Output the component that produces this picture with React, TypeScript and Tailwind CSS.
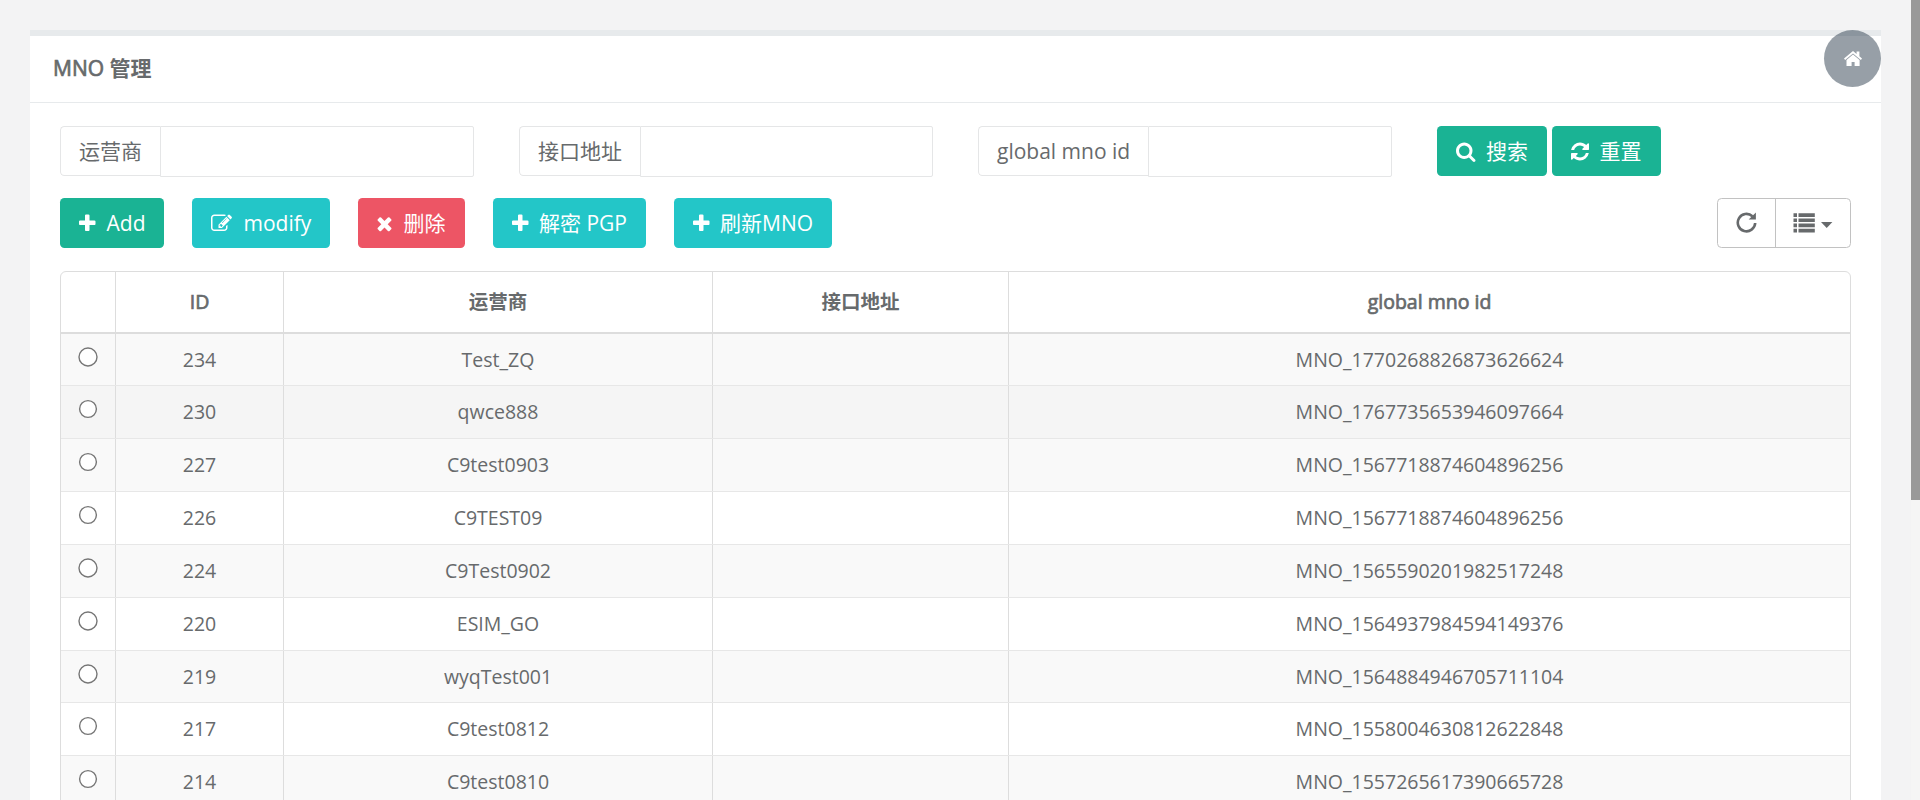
import React from "react";

type IconProps = { d: string; x?: number; w: number; className: string };

const Glyph = ({ d, x = 0, w, className }: IconProps) => (
  <svg viewBox={`${x} 0 ${w} 1792`} className={`shrink-0 ${className}`} fill="currentColor" aria-hidden="true">
    <path d={d} />
  </svg>
);

const PLUS =
  "M1600 736v192q0 40-28 68t-68 28h-416v416q0 40-28 68t-68 28h-192q-40 0-68-28t-28-68v-416h-416q-40 0-68-28t-28-68v-192q0-40 28-68t68-28h416v-416q0-40 28-68t68-28h192q40 0 68 28t28 68v416h416q40 0 68 28t28 68z";
const TIMES =
  "M1490 1322q0 40-28 68l-136 136q-28 28-68 28t-68-28l-294-294-294 294q-28 28-68 28t-68-28l-136-136q-28-28-28-68t28-68l294-294-294-294q-28-28-28-68t28-68l136-136q28-28 68-28t68 28l294 294 294-294q28-28 68-28t68 28l136 136q28 28 28 68t-28 68l-294 294 294 294q28 28 28 68z";
const SEARCH =
  "M1216 832q0-185-131.5-316.5t-316.5-131.5-316.5 131.5-131.5 316.5 131.5 316.5 316.5 131.5 316.5-131.5 131.5-316.5zm512 832q0 52-38 90t-90 38q-54 0-90-38l-343-342q-179 124-399 124-143 0-273.5-55.5t-225-150-150-225-55.5-273.5 55.5-273.5 150-225 225-150 273.5-55.5 273.5 55.5 225 150 150 225 55.5 273.5q0 220-124 399l343 343q37 37 37 90z";
const REFRESH =
  "M1639 1056q0 5-1 7-64 268-268 434.5t-478 166.5q-146 0-282.5-55t-243.5-157l-129 129q-19 19-45 19t-45-19-19-45v-448q0-26 19-45t45-19h448q26 0 45 19t19 45-19 45l-137 137q71 66 161 102t187 36q134 0 250-65t186-179q11-17 53-117 8-23 30-23h192q13 0 22.5 9.5t9.5 22.5zm25-800v448q0 26-19 45t-45 19h-448q-26 0-45-19t-19-45 19-45l138-138q-148-137-349-137-134 0-250 65t-186 179q-11 17-53 117-8 23-30 23h-199q-13 0-22.5-9.5t-9.5-22.5v-7q65-268 270-434.5t480-166.5q146 0 284 55.5t245 156.5l130-129q19-19 45-19t45 19 19 45z";
const EDIT =
  "M888 1184l116-116-152-152-116 116v56h96v96h56zm440-720q-16-16-33 1l-350 350q-17 17-1 33t33-1l350-350q17-17 1-33zm80 594v190q0 119-84.5 203.5t-203.5 84.5h-832q-119 0-203.5-84.5t-84.5-203.5v-832q0-119 84.5-203.5t203.5-84.5h832q63 0 117 25 15 7 18 23 3 17-9 29l-49 49q-14 14-32 8-23-6-45-6h-832q-66 0-113 47t-47 113v832q0 66 47 113t113 47h832q66 0 113-47t47-113v-126q0-13 9-22l64-64q15-15 35-7t20 29zm-96-738l288 288-672 672h-288v-288zm444 132l-92 92-288-288 92-92q28-28 68-28t68 28l152 152q28 28 28 68t-28 68z";

const Plus = () => <Glyph d={PLUS} x={192} w={1408} className="w-[16.5px] h-[21px]" />;

const Button = ({ icon, label, className }: { icon: React.ReactNode; label: string; className: string }) => (
  <button className={`flex h-[50px] shrink-0 items-center rounded-[4.5px] pl-[19px] text-[21px] leading-[30px] text-white whitespace-nowrap ${className}`}>
    {icon}
    <span>{label}</span>
  </button>
);

const Field = ({ label, labelClass }: { label: string; labelClass: string }) => (
  <div className="flex w-[414px] items-start text-[21px]">
    <span className={`flex h-[50px] shrink-0 items-center rounded-l-[4.5px] border border-r-0 border-[#e5e6e7] pl-[18px] pt-[2px] whitespace-nowrap ${labelClass}`}>
      {label}
    </span>
    <input className="h-[51px] min-w-0 flex-1 rounded-r-[2px] border border-[#e5e6e7] bg-white px-[18px] outline-none" />
  </div>
);

const Radio = ({ r }: { r: number }) => (
  <svg viewBox="0 0 20 20" className="size-[20px]" aria-hidden="true">
    <circle cx="10" cy="10" r={r} fill="#ffffff" stroke="#767676" strokeWidth="1.4" />
  </svg>
);

const rows = [
  { id: "234", name: "Test_ZQ", gid: "MNO_1770268826873626624", cls: "h-[52px] bg-[#f9f9f9]", r: 9 },
  { id: "230", name: "qwce888", gid: "MNO_1767735653946097664", cls: "h-[53px] bg-[#f5f5f5]", r: 8.4 },
  { id: "227", name: "C9test0903", gid: "MNO_1567718874604896256", cls: "h-[53px] bg-[#f9f9f9]", r: 8.4 },
  { id: "226", name: "C9TEST09", gid: "MNO_1567718874604896256", cls: "h-[53px]", r: 8.4 },
  { id: "224", name: "C9Test0902", gid: "MNO_1565590201982517248", cls: "h-[53px] bg-[#f9f9f9]", r: 9 },
  { id: "220", name: "ESIM_GO", gid: "MNO_1564937984594149376", cls: "h-[53px]", r: 9 },
  { id: "219", name: "wyqTest001", gid: "MNO_1564884946705711104", cls: "h-[52px] bg-[#f9f9f9]", r: 9 },
  { id: "217", name: "C9test0812", gid: "MNO_1558004630812622848", cls: "h-[53px]", r: 8.4 },
  { id: "214", name: "C9test0810", gid: "MNO_1557265617390665728", cls: "h-[53px] bg-[#f9f9f9]", r: 8.4 },
];

const COLS = "grid grid-cols-[54px_168px_429px_296px_1fr]";
const CELL = "flex items-center justify-center border-l border-[#dddddd]";
const THICK = "[-webkit-text-stroke:0.7px_#676a6c]";

export default function App() {
  return (
    <div className="relative flex h-[800px] w-[1920px] overflow-hidden bg-[#f3f3f4] font-['Open_Sans','Noto_Sans_CJK_SC',sans-serif] text-[19.5px] text-[#676a6c]">
      <main className="ml-[30px] mt-[30px] flex w-[1851px] flex-col border-t-[6px] border-[#e7eaec] bg-white">
        <header className="flex h-[67px] shrink-0 items-center border-b border-[#e7eaec] pl-[23px] text-[21px]">
          <h5>
            <span className={THICK}>MNO</span> <span className="font-bold">管理</span>
          </h5>
        </header>

        <section className="flex flex-col px-[30px] pt-[23px]">
          <div className="flex h-[51px] items-start gap-[45px]">
            <Field label="运营商" labelClass="w-[100px]" />
            <Field label="接口地址" labelClass="w-[121px]" />
            <Field label="global mno id" labelClass="w-[170px]" />
            <div className="flex gap-[5px]">
              <Button icon={<Glyph d={SEARCH} x={64} w={1664} className="h-[21px] w-[19.5px]" />} label="搜索" className="w-[110px] gap-[10.5px] bg-[#1ab394]" />
              <Button icon={<Glyph d={REFRESH} x={128} w={1536} className="h-[21px] w-[18px]" />} label="重置" className="w-[109px] gap-[10.5px] bg-[#1ab394]" />
            </div>
          </div>

          <div className="mt-[21px] flex h-[50px] justify-between">
            <div className="flex gap-[28px]">
              <Button icon={<Plus />} label="Add" className="w-[104px] gap-[11px] bg-[#1ab394]" />
              <Button icon={<Glyph d={EDIT} w={1792} className="size-[21px]" />} label="modify" className="w-[138px] gap-[11.5px] bg-[#23c6c8]" />
              <Button icon={<Glyph d={TIMES} x={302} w={1188} className="h-[21px] w-[15px]" />} label="删除" className="w-[107px] gap-[11.5px] bg-[#ed5565]" />
              <Button icon={<Plus />} label="解密 PGP" className="w-[153px] gap-[10.5px] bg-[#23c6c8]" />
              <Button icon={<Plus />} label="刷新MNO" className="w-[158px] gap-[10.5px] bg-[#23c6c8]" />
            </div>
            <div className="flex w-[134px] rounded-[4.5px] border border-[#c2c2c2]">
              <button className="flex w-[57px] items-center justify-center pb-px">
                <svg viewBox="0 0 21 21" className="size-[21px]" fill="none" aria-hidden="true">
                  <path d="M16.4 4.2A8.7 8.7 0 1 0 19.2 11" stroke="#676a6c" strokeWidth="2.6" />
                  <path d="M19.9 .4v7h-7.2z" fill="#676a6c" />
                </svg>
              </button>
              <button className="flex flex-1 items-center gap-[6px] border-l border-[#c2c2c2] pl-[17px]">
                <svg viewBox="0 0 22 20" className="h-[20px] w-[22px]" fill="#676a6c" aria-hidden="true">
                  <path d="M.5 .3h3.5v3.7H.5zM5.5 .3H21.8v3.7H5.5zM.5 5.4h3.5v3.7H.5zM5.5 5.4H21.8v3.7H5.5zM.5 10.6h3.5v3.7H.5zM5.5 10.6H21.8v3.7H5.5zM.5 15.8h3.5v3.7H.5zM5.5 15.8H21.8v3.7H5.5z" />
                </svg>
                <svg viewBox="0 0 12 6" className="mt-[3px] h-[6px] w-[12px]" fill="#676a6c" aria-hidden="true">
                  <path d="M0 0h11.4L5.7 6z" />
                </svg>
              </button>
            </div>
          </div>

          <div className="mt-[23px] rounded-t-[6px] border border-[#dddddd] bg-white">
            <div className={`${COLS} h-[62px] border-b-2 border-[#dddddd]`}>
              <div />
              <div className={`${CELL} ${THICK}`}>ID</div>
              <div className={`${CELL} font-bold`}>运营商</div>
              <div className={`${CELL} font-bold`}>接口地址</div>
              <div className={`${CELL} ${THICK}`}>global mno id</div>
            </div>
            {rows.map((r) => (
              <div key={r.id} className={`${COLS} ${r.cls} border-b border-[#e7e7e7]`}>
                <div className="flex items-start justify-center pt-[13px]">
                  <Radio r={r.r} />
                </div>
                <div className={CELL}>{r.id}</div>
                <div className={CELL}>{r.name}</div>
                <div className={CELL} />
                <div className={CELL}>{r.gid}</div>
              </div>
            ))}
          </div>
        </section>
      </main>

      <a className="absolute left-[1824px] top-[30px] flex size-[57px] items-center justify-center rounded-full bg-[#2f4050]/50 text-white">
        <svg viewBox="0 0 18 15" className="h-[15px] w-[18px]" fill="currentColor" aria-hidden="true">
          <path d="M9 3.4L15.6 8.9V15H10.6V11H7.6V15H2.5V8.9z" />
          <path d="M9 0L12.6 3V.6H15.4V5.3L18 7.6L16.9 8.9L9 2.4L1.1 8.9L0 7.6z" />
        </svg>
      </a>
      <div className="absolute right-0 top-0 h-full w-[9px] bg-[#f5f5f5]">
        <div className="h-[500px] bg-[#999999]" />
      </div>
    </div>
  );
}
